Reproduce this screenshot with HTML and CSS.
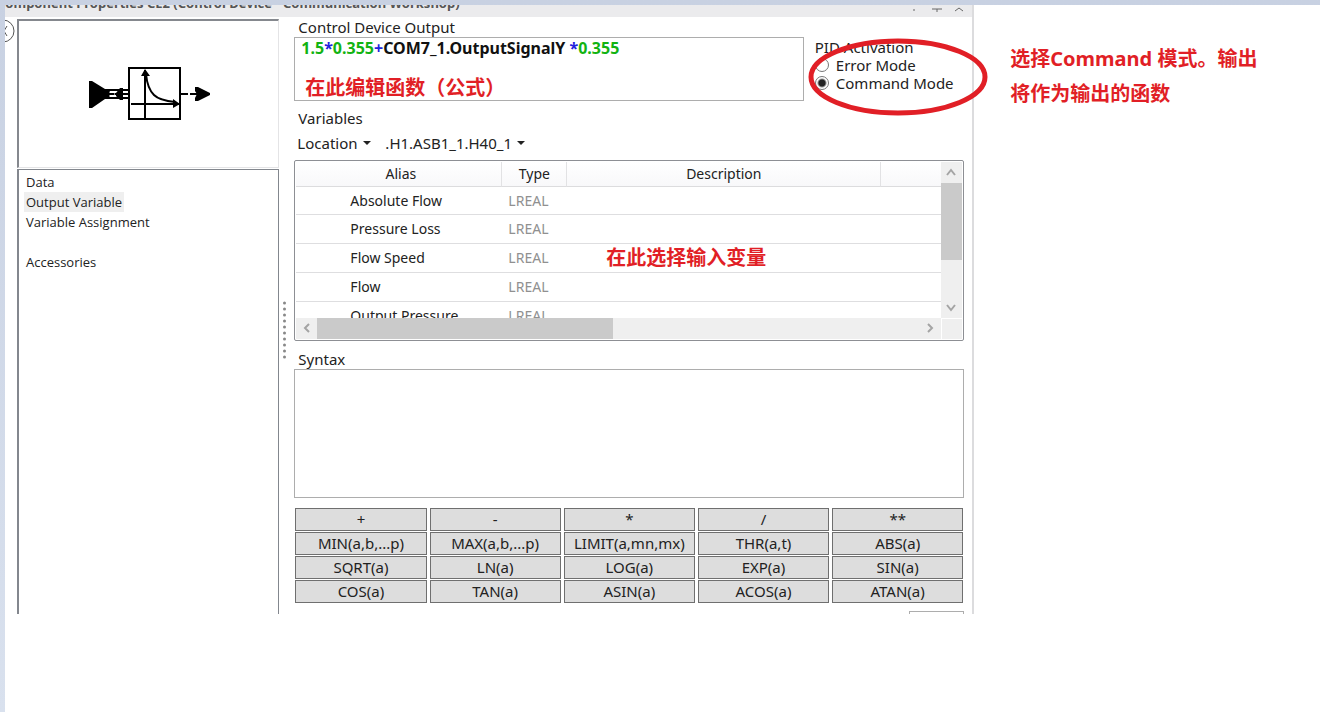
FILE: index.html
```html
<!DOCTYPE html>
<html lang="zh-CN">
<head>
<meta charset="utf-8">
<title>Component Properties</title>
<link rel="stylesheet" href="styles.css">
</head>
<body>
<div class="page">
  <section class="window">
    <header class="titlebar">
      <span class="title">Component Properties CE2 (Control Device - Communication Workshop)</span>
      <svg class="title-icons" width="62" height="12" viewBox="0 0 62 12" aria-hidden="true">
        <path d="M4 4V6M22 4H32M27 4V7M45 6L49 3L53 6"/>
      </svg>
    </header>
    <div class="body">
      <div class="rail">
        <button class="collapse" type="button" aria-label="Collapse">
          <svg width="24" height="24" viewBox="0 0 24 24"><circle cx="12" cy="12" r="11"/><path d="M16 7L13 12L16 17"/></svg>
        </button>
      </div>
      <aside class="sidebar">
        <div class="preview">
          <svg width="124" height="56" viewBox="86 66 124 56" role="img" aria-label="Control device">
            <path class="solid" d="M88 81H91L104 89H109V99H104L91 108H88Z"/>
            <path class="line" d="M104 90H128M104 94H128M104 98H128"/>
            <path class="gap" d="M109 91.5V93M109 95V97M113 94H114"/>
            <path class="solid" d="M115 93L119 88H122V100H119L115 96Z"/>
            <rect class="line" x="128" y="68" width="51" height="51"/>
            <path class="line" d="M144 70V119M130 104H178"/>
            <path class="line" d="M145 74C146 85 149 91 153 95C157 99 163 101 174 102"/>
            <path class="solid" d="M144 69L149 76H140ZM179 104L172 99V108Z"/>
            <path class="line" d="M180 94H187M189 94H198"/>
            <path class="solid" d="M194 87H197L209 93V95L197 101H194V98L196 94L194 91Z"/>
          </svg>
        </div>
        <nav class="nav">
          <a href="#data">Data</a>
          <a href="#output" class="current">Output Variable</a>
          <a href="#assignment">Variable Assignment</a>
          <a href="#accessories" class="spaced">Accessories</a>
        </nav>
      </aside>
      <div class="splitter"><svg width="5" height="61" viewBox="0 0 5 61" aria-hidden="true"><path d="M2.5 2V60"/></svg></div>
      <main class="main">
        <div class="top">
          <div class="output">
            <div class="label" id="output-label">Control Device Output</div>
            <div class="editor" role="textbox" aria-labelledby="output-label" contenteditable="true" spellcheck="false"><span class="num">1.5</span><span class="op">*</span><span class="num">0.355</span><span class="op">+</span>COM7_1.OutputSignalY <span class="op">*</span><span class="num">0.355</span></div>
            <p class="note note-editor">在此编辑函数（公式）</p>
          </div>
          <div class="pid">
            <fieldset>
              <legend>PID Activation</legend>
              <label><input type="radio" name="pid">Error Mode</label>
              <label><input type="radio" name="pid" checked>Command Mode</label>
            </fieldset>
            <svg class="ring" width="180" height="78" viewBox="0 0 180 78" aria-hidden="true"><ellipse cx="90" cy="39" rx="87" ry="36"/></svg>
          </div>
        </div>
        <div class="label variables">Variables</div>
        <div class="pickers">
          <span class="picker"><select aria-label="Location type"><option>Location</option></select></span>
          <span class="picker"><select aria-label="Location"><option>.H1.ASB1_1.H40_1</option></select></span>
        </div>
        <div class="grid">
          <div class="rows">
            <table>
              <colgroup><col class="c-alias"><col class="c-type"><col><col class="c-rest"></colgroup>
              <thead><tr><th>Alias</th><th>Type</th><th>Description</th><th></th></tr></thead>
              <tbody>
                <tr><td>Absolute Flow</td><td>LREAL</td><td></td><td></td></tr>
                <tr><td>Pressure Loss</td><td>LREAL</td><td></td><td></td></tr>
                <tr><td>Flow Speed</td><td>LREAL</td><td></td><td></td></tr>
                <tr><td>Flow</td><td>LREAL</td><td></td><td></td></tr>
                <tr><td>Output Pressure</td><td>LREAL</td><td></td><td></td></tr>
              </tbody>
            </table>
          </div>
          <div class="vbar">
            <svg width="21" height="21" viewBox="0 0 21 21"><path d="M6 13L10 8L14 13"/></svg>
            <div class="vthumb"></div>
            <svg width="21" height="21" viewBox="0 0 21 21"><path d="M6 8L10 13L14 8"/></svg>
          </div>
          <div class="hbar">
            <svg width="21" height="21" viewBox="0 0 21 21"><path d="M13 6L9 10L13 14"/></svg>
            <div class="htrack"><div class="hthumb"></div></div>
            <svg width="21" height="21" viewBox="0 0 21 21"><path d="M8 6L12 10L8 14"/></svg>
          </div>
          <div class="corner"></div>
          <p class="note note-grid">在此选择输入变量</p>
        </div>
        <label class="label syntax-label" for="syntax">Syntax</label>
        <textarea class="syntax" id="syntax"></textarea>
        <div class="keys">
          <button type="button">+</button><button type="button">-</button><button type="button">*</button><button type="button">/</button><button type="button">**</button>
          <button type="button">MIN(a,b,...p)</button><button type="button">MAX(a,b,...p)</button><button type="button">LIMIT(a,mn,mx)</button><button type="button">THR(a,t)</button><button type="button">ABS(a)</button>
          <button type="button">SQRT(a)</button><button type="button">LN(a)</button><button type="button">LOG(a)</button><button type="button">EXP(a)</button><button type="button">SIN(a)</button>
          <button type="button">COS(a)</button><button type="button">TAN(a)</button><button type="button">ASIN(a)</button><button type="button">ACOS(a)</button><button type="button">ATAN(a)</button>
        </div>
        <div class="footer-edge"></div>
      </main>
    </div>
  </section>
  <p class="note side-note">选择Command 模式。输出<br>将作为输出的函数</p>
</div>
</body>
</html>
```
FILE: styles.css
```css
* { box-sizing: border-box; }

body {
  margin: 0;
  min-height: 100vh;
  padding: 5px 0 0 5px;
  background: linear-gradient(#fff, #fff) 5px 5px no-repeat, linear-gradient(#c8d1e2, #d9e1ee);
  font-family: "Noto Sans", "Noto Sans CJK SC", sans-serif;
  font-size: 15px;
  line-height: 20px;
  color: #222;
}

button, select, textarea, input { font: inherit; color: inherit; margin: 0; }
p { margin: 0; }

.page { display: flex; align-items: flex-start; }

.window {
  flex: 968 1 0;
  min-width: 0;
  border-right: 2px solid #dcdcde;
}

.titlebar {
  display: flex;
  justify-content: space-between;
  align-items: flex-end;
  height: 12px;
  padding-bottom: 4px;
  overflow: hidden;
  background: #ebebed;
  color: #555;
  font-size: 13px;
  font-weight: bold;
}
.title { margin-left: -8px; white-space: nowrap; }
.title-icons { flex: none; margin-bottom: -4px; fill: none; stroke: #666; }

.body { display: flex; }

.rail { flex: none; width: 12px; padding-top: 2px; overflow: hidden; }
.collapse {
  display: block;
  margin-left: -14px;
  padding: 0;
  border: 0;
  background: none;
}
.collapse svg { display: block; fill: none; stroke: #555; }

.sidebar { flex: 262 1 0; min-width: 0; display: flex; flex-direction: column; padding-top: 2px; }
.preview {
  display: flex;
  align-items: center;
  justify-content: center;
  height: 149px;
  border: 2px solid #85888e;
  border-right: 1px solid #e4e4e6;
  border-bottom: 1px solid #e4e4e6;
}
.preview svg { fill: none; stroke-width: 2; }
.line { stroke: #000; }
.gap { stroke: #fff; stroke-width: 1; }
.solid { fill: #000; }

.nav {
  flex: 1;
  display: flex;
  flex-direction: column;
  align-items: flex-start;
  margin-top: 1px;
  padding: 2px 5px;
  border: 1px solid #83878e;
  border-left-width: 2px;
  border-bottom: 0;
  font-family: "Open Sans", sans-serif;
  font-size: 13px;
}
.nav a { padding: 0 2px; color: #222; text-decoration: none; }
.nav .current { background: #efefef; }
.nav .spaced { margin-top: 20px; }

.splitter {
  flex: none;
  display: flex;
  align-items: center;
  justify-content: center;
  width: 15px;
  padding: 32px 5px 0 0;
}
.splitter path { stroke: #888; stroke-width: 3; stroke-linecap: round; stroke-dasharray: 0 6; }

.main { flex: 669 1 0; min-width: 0; margin-right: 8px; }
.label { padding-left: 4px; }

.top { display: flex; }
.output { position: relative; flex: 508 1 0; min-width: 0; }
.editor {
  height: 64px;
  padding: 0 6px;
  border: 1px solid #adadad;
  color: #111;
  font-weight: bold;
  font-size: 16px;
  outline: none;
}
.num { color: #12b312; }
.op { color: #2222dd; }

.note {
  color: #e11f26;
  font-family: "Noto Sans", "Noto Sans CJK SC", sans-serif;
  font-size: 20px;
  font-weight: bold;
  line-height: 24px;
  white-space: nowrap;
}
.note-editor { position: absolute; left: 11px; bottom: 1px; }

.pid { position: relative; flex: 160 1 0; min-width: 0; }
.pid fieldset {
  min-width: 0;
  margin: 0;
  padding: 0 0 0 11px;
  border: 0;
}
.pid legend { padding: 21px 0 0; line-height: 18px; }
.pid label { display: flex; align-items: center; gap: 7px; line-height: 18px; white-space: nowrap; }
.pid input {
  appearance: none;
  width: 14px;
  height: 14px;
  border: 1px solid #777;
  border-radius: 50%;
  background: #fff;
}
.pid input:checked { background: radial-gradient(circle, #222 0 3px, #fff 5px); }
.ring { position: absolute; left: 4px; top: 21px; fill: none; stroke: #e11f26; stroke-width: 5; pointer-events: none; }

.variables { margin-top: 7px; }
.pickers { display: flex; gap: 14px; padding: 5px 3px 7px; }
.picker { display: flex; align-items: center; gap: 5px; }
.picker select { appearance: none; padding: 0; border: 0; background: none; }
.picker::after {
  content: "";
  border: 4px solid transparent;
  border-top-color: #222;
  border-bottom: 0;
}

.grid {
  position: relative;
  display: grid;
  grid-template-columns: 1fr 21px;
  grid-template-rows: 156px 21px;
  padding: 1px;
  border: 1px solid #8d8f94;
  border-radius: 2px;
}
.rows { overflow: hidden; }
.rows table {
  width: 100%;
  border-collapse: separate;
  border-spacing: 0;
  table-layout: fixed;
  font-size: 14px;
}
.c-alias { width: 206px; }
.c-type { width: 65px; }
.c-rest { width: 60px; }
.rows th {
  height: 25px;
  padding: 0;
  border-right: 1px solid #e2e2e4;
  border-bottom: 1px solid #dcdcde;
  background: linear-gradient(#fff, #f8f8fa);
  font-weight: normal;
}
.rows th:first-child { padding-left: 4px; }
.rows th:last-child { border-right: 0; }
.rows td { height: 29px; padding: 0 0 0 6px; border-bottom: 1px solid #dedee0; color: #909090; }
.rows tr:first-child td { height: 28px; }
.rows td:first-child { padding-left: 54px; color: #222; }

.vbar { display: flex; flex-direction: column; background: #efefef; }
.vbar svg, .hbar svg { flex: none; display: block; fill: none; stroke: #a4a4a4; stroke-width: 2; }
.vthumb { height: 77px; margin-bottom: auto; background: #cacaca; }
.hbar { display: flex; background: #efefef; }
.htrack { flex: 1; }
.hthumb { width: 49%; height: 21px; background: #cacaca; }
.corner { margin: 1px 0 0 1px; background: #efefef; }
.note-grid { position: absolute; left: 311px; top: 85px; }

.syntax-label { display: block; margin-top: 8px; }
.syntax {
  display: block;
  width: 100%;
  height: 129px;
  border: 1px solid #adadad;
  background: #fff;
  resize: none;
  outline: none;
}

.keys {
  display: grid;
  grid-template-columns: repeat(5, 1fr);
  gap: 1px 3px;
  margin: 10px 1px 0;
}
.keys button {
  height: 23px;
  padding: 0 0 2px;
  border: 1px solid #6f6f6f;
  background: #dddddd;
  line-height: 18px;
}

.footer-edge {
  width: 55px;
  height: 3px;
  margin: 8px 0 0 auto;
  border: 1px solid #adadad;
  border-bottom: 0;
}

.side-note { flex: 310 1 0; min-width: 0; padding: 36px 0 0 36px; line-height: 35px; }
```
